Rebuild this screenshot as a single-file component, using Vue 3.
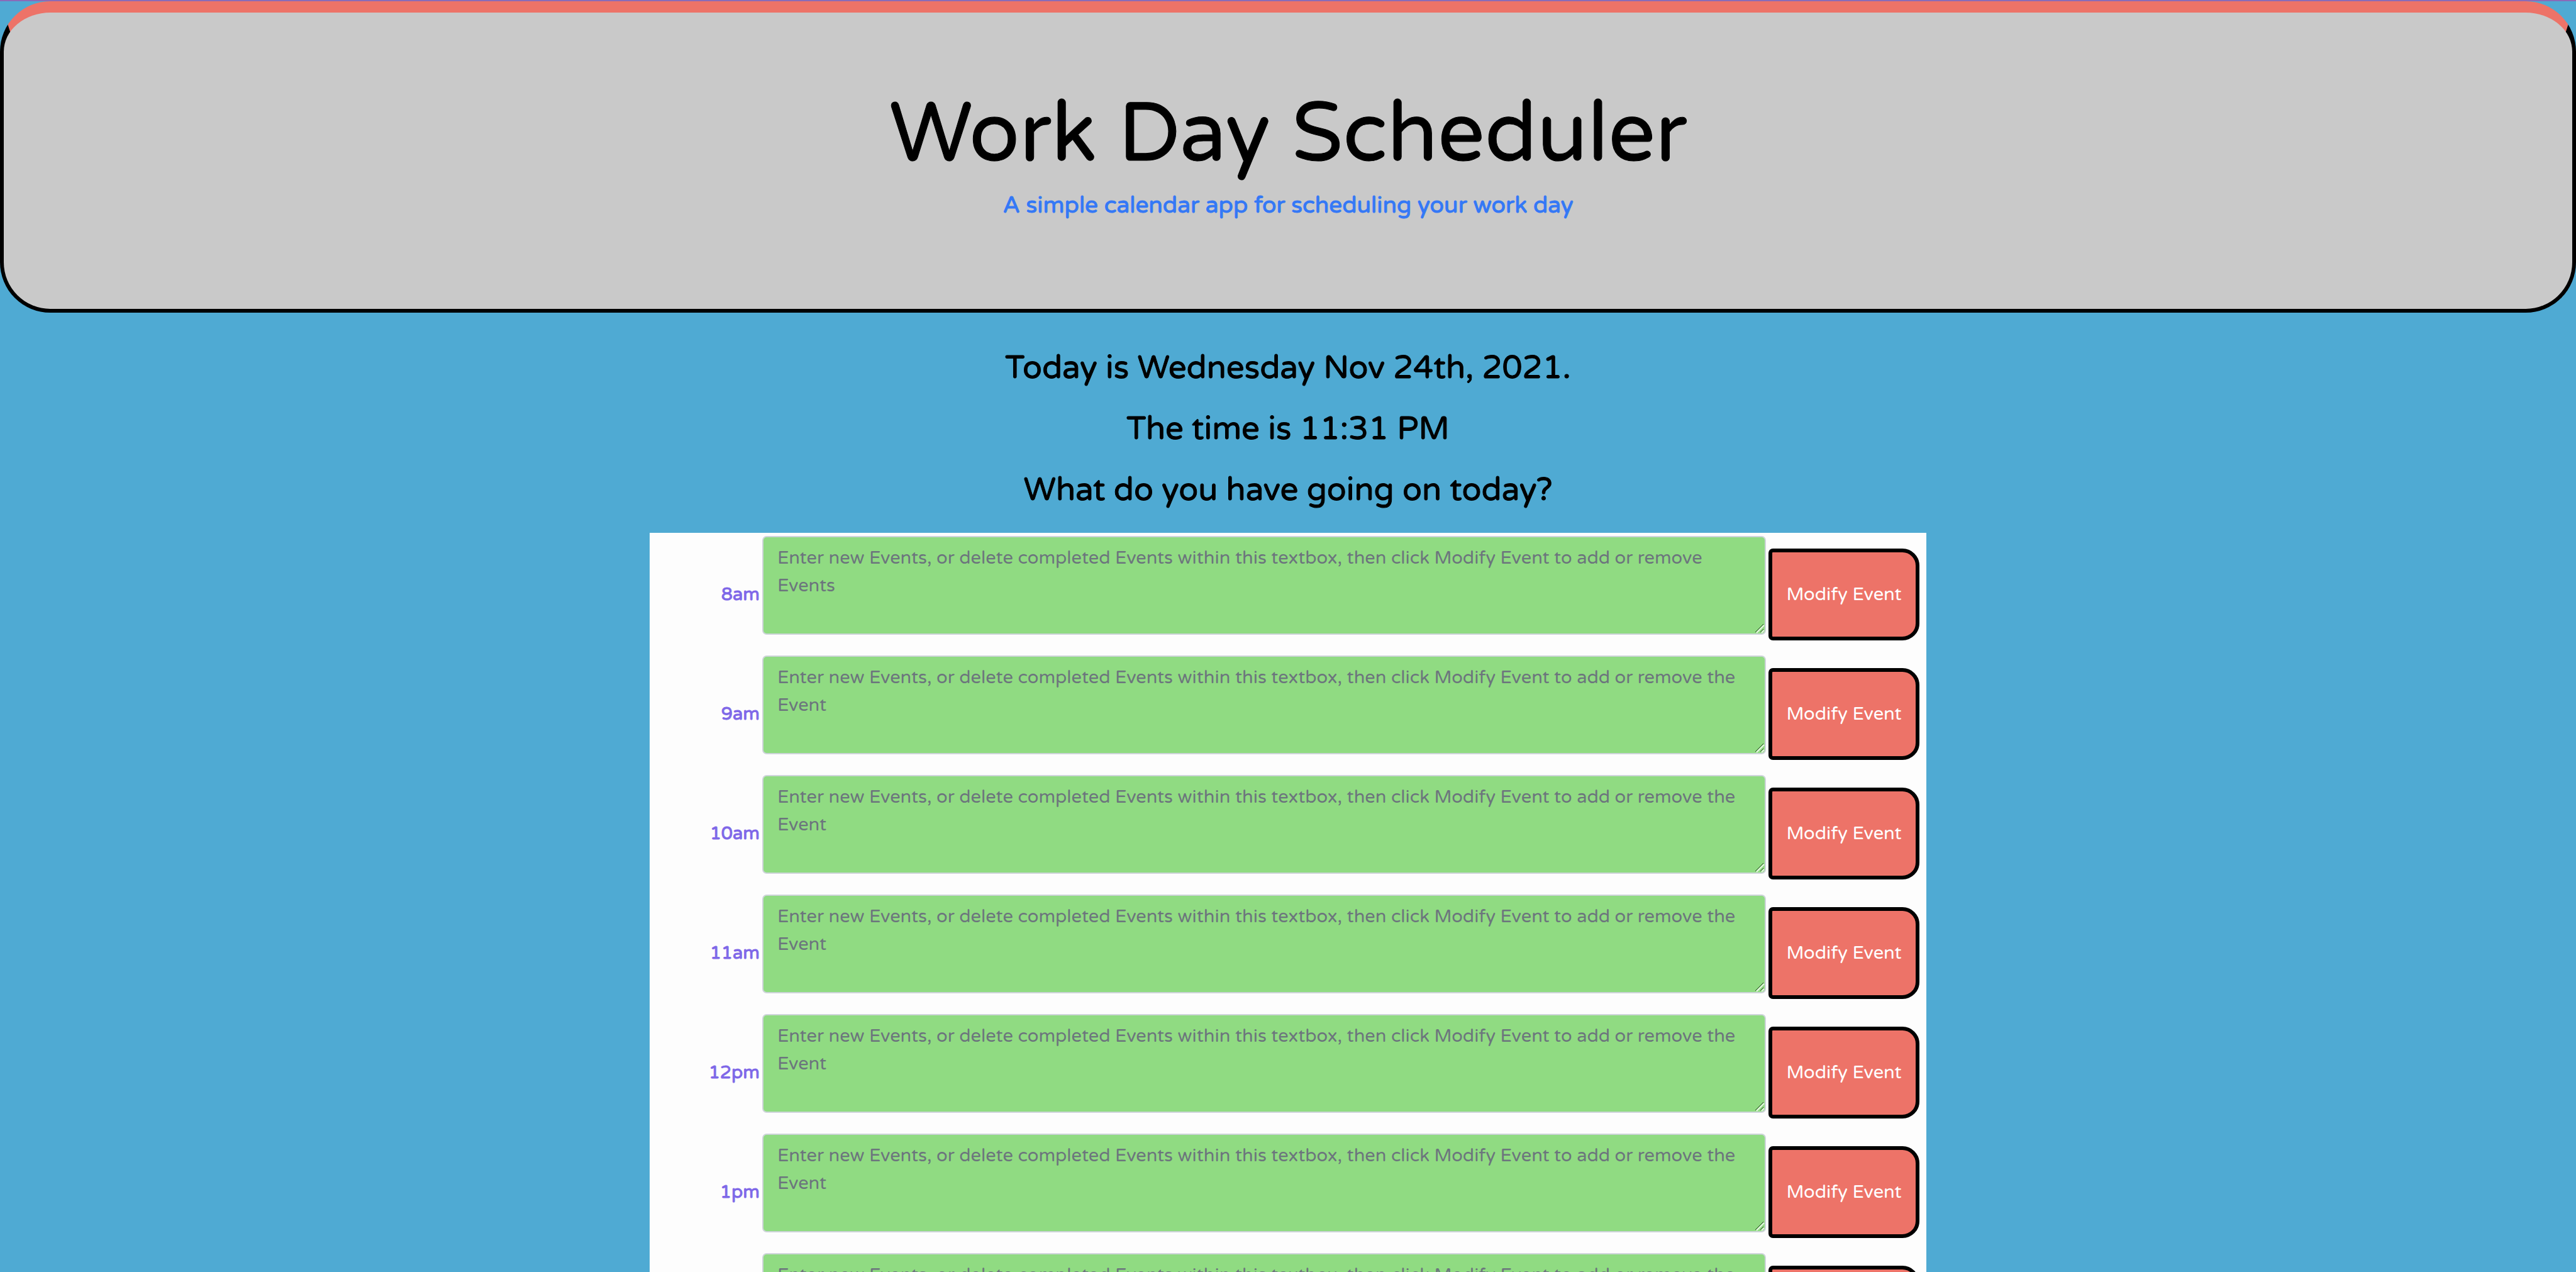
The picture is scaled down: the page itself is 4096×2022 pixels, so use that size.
<script setup>
import { reactive } from 'vue'

const hours = ['8am', '9am', '10am', '11am', '12pm', '1pm', '2pm', '3pm', '4pm', '5pm']
const prompt =
  'Enter new Events, or delete completed Events within this textbox, then click Modify Event to add or remove '

const blocks = reactive(
  hours.map((hour, i) => ({
    hour,
    text: '',
    placeholder: prompt + (i === 0 ? 'Events' : 'the Event'),
  }))
)

function save(block) {
  localStorage.setItem(block.hour, block.text)
}
</script>

<template>
  <div class="page">
    <header class="jumbotron">
      <h1>Work Day Scheduler</h1>
      <p class="lead">A simple calendar app for scheduling your work day</p>
    </header>

    <section class="today">
      <p>Today is Wednesday Nov 24th, 2021.</p>
      <p>The time is 11:31 PM</p>
      <p>What do you have going on today?</p>
    </section>

    <main class="schedule">
      <div v-for="block in blocks" :key="block.hour" class="row">
        <label class="hour" :for="'event-' + block.hour">{{ block.hour }}</label>
        <textarea
          :id="'event-' + block.hour"
          v-model="block.text"
          class="event"
          :placeholder="block.placeholder"
        ></textarea>
        <button type="button" class="modify" @click="save(block)">Modify Event</button>
      </div>
    </main>
  </div>
</template>

<style>
body {
  margin: 0;
  background: #4faad3;
}
</style>

<style scoped>
.page {
  box-sizing: border-box;
  height: 100vh;
  overflow-y: auto;
  scrollbar-width: none;
  border-top: 2px solid #8a6bb8;
  background: #4faad3;
  color: #000;
  font-family: "Varela Round", "Noto Sans", sans-serif;
  -webkit-text-stroke-width: 1px;
}

.jumbotron {
  padding: 115px 64px 137px;
  border: 6px solid #000;
  border-top: 18px solid #ed7368;
  border-radius: 80px;
  background: #c9c9c9;
  text-align: center;
}

h1 {
  margin: 0 0 6px;
  font-size: 132px;
  font-weight: 400;
  line-height: 158px;
}

.lead {
  margin: 0;
  color: #3478f6;
  font-size: 37px;
  line-height: 55px;
}

.today {
  display: flex;
  flex-direction: column;
  gap: 20px;
  padding: 50px 0 29px;
  text-align: center;
  font-size: 51px;
  line-height: 77px;
}

.today p {
  margin: 0;
}

.schedule {
  box-sizing: border-box;
  max-width: 2030px;
  margin: 0 auto;
  padding: 5px 11px 0 0;
  background: #fdfdfd;
  font-size: 29px;
  line-height: 44px;
}

.row {
  display: grid;
  grid-template-columns: 175px 1fr 240px;
  column-gap: 4px;
  align-items: start;
  height: 190px;
}

.hour {
  display: flex;
  align-items: center;
  justify-content: flex-end;
  height: 146px;
  margin-top: 20px;
  color: #7f68e8;
}

.event {
  box-sizing: border-box;
  width: 100%;
  height: 157px;
  margin: 0;
  padding: 11px 22px;
  border: 2px solid #ced4da;
  border-radius: 7px;
  background: #90db82;
  color: #495057;
  font: inherit;
  -webkit-text-stroke-width: 0;
  overflow: auto;
  resize: vertical;
}

.event::placeholder {
  color: #6c757d;
  opacity: 1;
}

.event::-webkit-resizer {
  background: url("data:image/svg+xml,%3Csvg xmlns='http://www.w3.org/2000/svg' width='15' height='15' fill='none'%3E%3Cpath d='M2 14 14 2M10 14l4-4' stroke='%23e4f5e0' stroke-width='2'/%3E%3Cpath d='M0 13 13 0M8 13l5-5' stroke='%232c4328'/%3E%3C/svg%3E") no-repeat;
}

.modify {
  height: 146px;
  margin: 20px 0 0;
  padding: 0;
  border: 6px solid #000;
  border-radius: 7px 27px 27px 7px;
  background: #ed7368;
  color: #fff;
  font: inherit;
  -webkit-text-stroke-width: 0;
  cursor: pointer;
}
</style>
